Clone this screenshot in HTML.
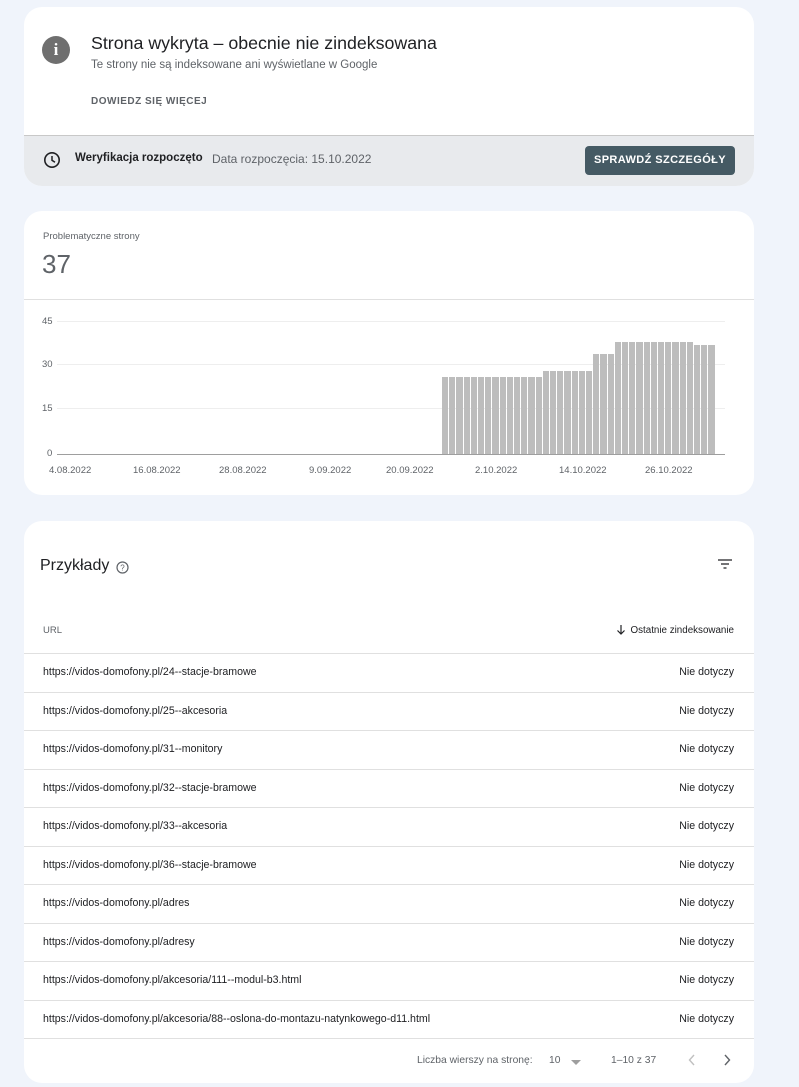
<!DOCTYPE html>
<html><head><meta charset="utf-8"><style>
*{margin:0;padding:0;box-sizing:border-box}
body{width:799px;height:1087px;background:#f0f4fb;font-family:"Liberation Sans",Arial,sans-serif;position:relative;overflow:hidden;color:#202124}
.card{position:absolute;left:24px;width:730px;background:#fff;border-radius:18px;overflow:hidden}
.a{position:absolute;white-space:nowrap}
.row{position:absolute;left:0;width:730px;height:38.5px;border-top:1px solid #e0e0e0;font-size:10.6px;color:#202124}
.row .u{position:absolute;left:19px;top:12px}
.row .n{position:absolute;right:20px;top:12px}
.bar{position:absolute;bottom:0;width:6.3px;background:#bdbdbd}
.xl{position:absolute;top:254px;font-size:9.5px;color:#5f6368;white-space:nowrap}
</style></head><body>

<div class="card" style="top:7px;height:179px">
  <div class="a" style="left:18px;top:29px;width:28px;height:28px;border-radius:50%;background:#6f6f6f;color:#fff;font-weight:bold;font-size:17px;text-align:center;line-height:28px;font-family:'Liberation Serif',serif">i</div>
  <div class="a" style="left:67px;top:26px;font-size:17.8px;color:#202124">Strona wykryta – obecnie nie zindeksowana</div>
  <div class="a" style="left:67px;top:52px;font-size:11.5px;color:#5f6368">Te strony nie są indeksowane ani wyświetlane w Google</div>
  <div class="a" style="left:67px;top:89px;font-size:10px;color:#5f6368;letter-spacing:.5px;font-weight:bold">DOWIEDZ SIĘ WIĘCEJ</div>
  <div class="a" style="left:0;top:128px;width:730px;height:51px;background:#e8eaed;border-top:1px solid #c8c8c8"></div>
  <svg class="a" style="left:19px;top:144px" width="18" height="18" viewBox="0 0 18 18"><circle cx="9" cy="9" r="7.2" fill="none" stroke="#202124" stroke-width="1.6"/><path d="M9 5v4.3l3 2" fill="none" stroke="#202124" stroke-width="1.5"/></svg>
  <div class="a" style="left:51px;top:145px;font-size:11.5px;font-weight:bold;color:#202124">Weryfikacja rozpoczęto</div>
  <div class="a" style="left:188px;top:145px;font-size:12px;color:#5f6368">Data rozpoczęcia: 15.10.2022</div>
  <div class="a" style="left:561px;top:139px;width:150px;height:29px;background:#455a64;border-radius:4px;color:#fff;font-size:11px;font-weight:bold;text-align:center;line-height:29px;letter-spacing:.4px">SPRAWDŹ SZCZEGÓŁY</div>
</div>

<div class="card" style="top:211px;height:284px">
  <div class="a" style="left:19px;top:20px;font-size:9.5px;color:#5f6368">Problematyczne strony</div>
  <div class="a" style="left:18px;top:38px;font-size:26px;color:#5f6368">37</div>
  <div class="a" style="left:0;top:88px;width:730px;height:1px;background:#e0e0e0"></div>
  <div class="a" style="left:33px;top:110px;width:668px;height:1px;background:#eee"></div>
  <div class="a" style="left:33px;top:153px;width:668px;height:1px;background:#eee"></div>
  <div class="a" style="left:33px;top:197px;width:668px;height:1px;background:#eee"></div>
  <div class="a" style="left:33px;top:243px;width:668px;height:1px;background:#9e9e9e"></div>
  <div class="a" style="left:18px;top:105px;font-size:9.5px;color:#5f6368">45</div>
  <div class="a" style="left:18px;top:148px;font-size:9.5px;color:#5f6368">30</div>
  <div class="a" style="left:18px;top:192px;font-size:9.5px;color:#5f6368">15</div>
  <div class="a" style="left:23px;top:237px;font-size:9.5px;color:#5f6368">0</div>
  <div id="bars" class="a" style="left:0;top:0;width:730px;height:243px"></div>
  <div class="xl" style="left:25px">4.08.2022</div>
  <div class="xl" style="left:109px">16.08.2022</div>
  <div class="xl" style="left:195px">28.08.2022</div>
  <div class="xl" style="left:285px">9.09.2022</div>
  <div class="xl" style="left:362px">20.09.2022</div>
  <div class="xl" style="left:451px">2.10.2022</div>
  <div class="xl" style="left:535px">14.10.2022</div>
  <div class="xl" style="left:621px">26.10.2022</div>
</div>

<div class="card" style="top:521px;height:562px">
  <div class="a" style="left:16px;top:36px;font-size:16px;color:#202124">Przykłady</div>
  <svg class="a" style="left:92px;top:40px" width="13" height="13" viewBox="0 0 13 13"><circle cx="6.5" cy="6.5" r="5.5" fill="none" stroke="#5f6368" stroke-width="1.2"/><text x="6.5" y="9.5" font-size="8" text-anchor="middle" fill="#5f6368" font-family="Liberation Sans">?</text></svg>
  <svg class="a" style="left:693px;top:37px" width="16" height="12" viewBox="0 0 16 12"><path d="M1 2h14M4 6h8M6.5 10h3" stroke="#202124" stroke-width="1.3"/></svg>
  <div class="a" style="left:19px;top:104px;font-size:9.5px;color:#5f6368">URL</div>
  <svg class="a" style="left:592px;top:103px" width="10" height="11" viewBox="0 0 10 11"><path d="M5 1v9M1.5 6.5L5 10l3.5-3.5" fill="none" stroke="#202124" stroke-width="1.2"/></svg>
  <div class="a" style="right:20px;top:104px;font-size:9.8px;color:#202124">Ostatnie zindeksowanie</div>
  <div class="row" style="top:132px"><span class="u">https://vidos-domofony.pl/24--stacje-bramowe</span><span class="n">Nie dotyczy</span></div>
  <div class="row" style="top:170.5px"><span class="u">https://vidos-domofony.pl/25--akcesoria</span><span class="n">Nie dotyczy</span></div>
  <div class="row" style="top:209px"><span class="u">https://vidos-domofony.pl/31--monitory</span><span class="n">Nie dotyczy</span></div>
  <div class="row" style="top:247.5px"><span class="u">https://vidos-domofony.pl/32--stacje-bramowe</span><span class="n">Nie dotyczy</span></div>
  <div class="row" style="top:286px"><span class="u">https://vidos-domofony.pl/33--akcesoria</span><span class="n">Nie dotyczy</span></div>
  <div class="row" style="top:324.5px"><span class="u">https://vidos-domofony.pl/36--stacje-bramowe</span><span class="n">Nie dotyczy</span></div>
  <div class="row" style="top:363px"><span class="u">https://vidos-domofony.pl/adres</span><span class="n">Nie dotyczy</span></div>
  <div class="row" style="top:401.5px"><span class="u">https://vidos-domofony.pl/adresy</span><span class="n">Nie dotyczy</span></div>
  <div class="row" style="top:440px"><span class="u">https://vidos-domofony.pl/akcesoria/111--modul-b3.html</span><span class="n">Nie dotyczy</span></div>
  <div class="row" style="top:478.5px"><span class="u">https://vidos-domofony.pl/akcesoria/88--oslona-do-montazu-natynkowego-d11.html</span><span class="n">Nie dotyczy</span></div>
  <div class="row" style="top:517px;height:45px"></div>
  <div class="a" style="left:393px;top:534px;font-size:10.3px;color:#5f6368">Liczba wierszy na stronę:</div>
  <div class="a" style="left:525px;top:534px;font-size:10.3px;color:#5f6368">10</div>
  <div class="a" style="left:547px;top:539px;width:0;height:0;border-left:5px solid transparent;border-right:5px solid transparent;border-top:5px solid #9e9e9e"></div>
  <div class="a" style="left:587px;top:534px;font-size:10.3px;color:#5f6368">1–10 z 37</div>
  <svg class="a" style="left:663px;top:532px" width="10" height="14" viewBox="0 0 10 14"><path d="M7 2L2.5 7 7 12" fill="none" stroke="#c0c0c0" stroke-width="1.4"/></svg>
  <svg class="a" style="left:698px;top:532px" width="10" height="14" viewBox="0 0 10 14"><path d="M3 2l4.5 5L3 12" fill="none" stroke="#5f6368" stroke-width="1.4"/></svg>
</div>

<script>
var v=[];for(var i=0;i<14;i++)v.push(26);for(i=0;i<7;i++)v.push(28);for(i=0;i<3;i++)v.push(34);for(i=0;i<11;i++)v.push(38);for(i=0;i<3;i++)v.push(37);
var h='';for(i=0;i<v.length;i++){h+='<div class="bar" style="left:'+(418+i*7.2).toFixed(1)+'px;height:'+(v[i]*133/45).toFixed(1)+'px"></div>';}
document.getElementById('bars').innerHTML=h;
</script>
</body></html>
